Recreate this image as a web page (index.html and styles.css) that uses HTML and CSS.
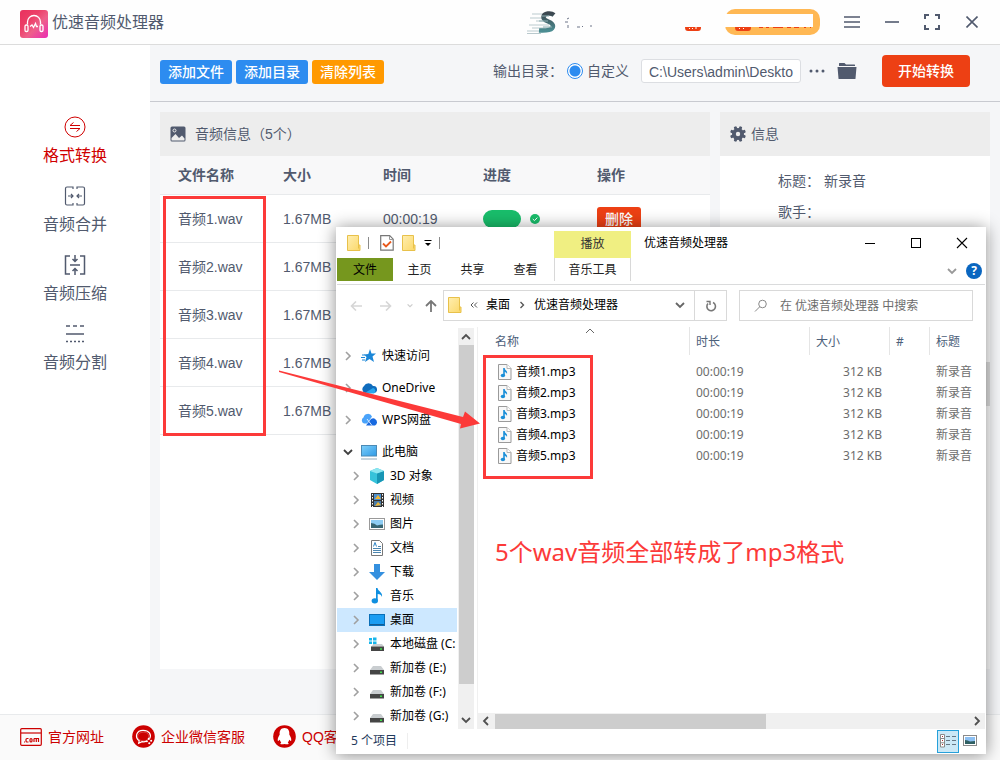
FILE: index.html
```html
<!DOCTYPE html>
<html lang="zh-CN">
<head>
<meta charset="utf-8">
<meta name="viewport" content="width=device-width, initial-scale=1">
<title>优速音频处理器</title>
<link rel="stylesheet" href="styles.css">
</head>
<body>
<svg class="defs" aria-hidden="true">
  <defs>
    <linearGradient id="g-logo" x1="0" y1="0" x2="1" y2="1"><stop offset="0" stop-color="#e9305e"/><stop offset=".35" stop-color="#ec3f67"/><stop offset=".6" stop-color="#ee608a"/><stop offset="1" stop-color="#ea2bb4"/></linearGradient>
    <linearGradient id="g-s" x1="0" y1="0" x2="0" y2="1"><stop offset="0" stop-color="#3c4850"/><stop offset="1" stop-color="#4c8d92"/></linearGradient>
    <linearGradient id="g-folder" x1="0" y1="0" x2="1" y2="1"><stop offset="0" stop-color="#ffeeb0"/><stop offset="1" stop-color="#fbd869"/></linearGradient>
    <linearGradient id="g-screen" x1="0" y1="0" x2="1" y2="1"><stop offset="0" stop-color="#7fd0fa"/><stop offset="1" stop-color="#2f9ae6"/></linearGradient>
  </defs>
  <symbol id="chev" viewBox="0 0 8 10"><path d="M2 1l4 4-4 4" fill="none" stroke="#a0a0a0" stroke-width="1.6"/></symbol>
  <symbol id="chev-down" viewBox="0 0 10 8"><path d="M1 2l4 4 4-4" fill="none" stroke="currentColor" stroke-width="1.8"/></symbol>
  <symbol id="folder" viewBox="0 0 14 16"><path d="M.5.5h11v9.500h1.500v5.500H.5z" fill="url(#g-folder)" stroke="#e8c14a"/><path d="M11.500 10v3.500" stroke="#e8c14a"/></symbol>
  <symbol id="mp3" viewBox="0 0 14 16"><path d="M.5.5h8.500l4 4v11H.5z" fill="#f8f8f8" stroke="#9a9a9a"/><path d="M9 .5v4h4" fill="#fff" stroke="#b5b5b5"/><path d="M6 4v7.500" stroke="#1b8fd8" stroke-width="1.600"/><path d="M6 4c.6 2 4 2.500 3 6C8.500 8.500 7.500 8 6 7.500z" fill="#1b8fd8"/><ellipse cx="4.900" cy="11.500" rx="2.200" ry="1.800" fill="#1b8fd8"/></symbol>
  <symbol id="drive" viewBox="0 0 16 16"><path d="M4 6h8l3 4H1z" fill="#c9cdd0"/><rect x="1" y="10" width="14" height="4.500" fill="#454545"/><rect x="11" y="11.500" width="2" height="1.500" fill="#3fe04a"/></symbol>
</svg>

<div class="app">
  <header class="topbar">
    <svg class="brand-logo" viewBox="0 0 28 28" width="28" height="28" aria-hidden="true"><rect width="28" height="28" rx="3" fill="url(#g-logo)"/><g fill="none" stroke="#fff" stroke-width="1.300"><path d="M7.500 14.500V12a6.500 6.500 0 0 1 13 0v2.500"/><rect x="5" y="15" width="3" height="6.500" rx="1.300"/><rect x="20" y="15" width="3" height="6.500" rx="1.300"/><path d="M10 16.500l2-1.500 1.500 2.500 2-4 1 3h1.500"/></g></svg>
    <h1 class="brand-name">优速音频处理器</h1>
    <svg class="account" viewBox="0 0 294 30" width="294" height="30" aria-hidden="true">
      <g stroke="#b9c9cd" stroke-width="1.200"><path d="M6 6h14M4 10h14M10 13h10M3 17h20M6 20h18M1 23h20M1 25.500h14"/></g>
      <path d="M28 7c-3-2.500-10-2-10.500 2-.5 5 9.500 4 9.500 9 0 4-6 5-14 4.500" fill="none" stroke="url(#g-s)" stroke-width="4.500"/>
      <path d="M16 8h7M13 13h9M17 19h9" stroke="#8fb0b4" stroke-width="1"/>
      <g stroke="#6d7488" fill="none"><path d="M41 11l2-1M39 14h3M42 17v3M51 19h3M56 18l1 1M64 18h2"/></g>
      <path d="M159 19h16c0 3-1 4-3 4h-10c-2 0-3-1-3-4z" fill="#ed4014"/><path d="M163 20l1 1M166 20l1 1M170 19v2" stroke="#fff"/>
      <rect x="199" y="1" width="95" height="26" rx="10" fill="#ffb854"/>
      <path d="M209 19h16c0 3-1 4-3 4h-10c-2 0-3-1-3-4z" fill="#ed4014"/><path d="M213 20l1 1M217 20l1 1" stroke="#fff"/>
      <path d="M233 19h4M240 19h3M247 19h10M261 19h4M268 19h5M278 19h2M284 19h1" stroke="#ed4014" stroke-width="2"/>
      <path d="M199 6h88v13h-88z" fill="#fff"/>
    </svg>
    <div class="win-tools">
      <button aria-label="菜单"><svg viewBox="0 0 16 12" width="16" height="12"><path d="M0 1h16M0 6h16M0 11h16" stroke="currentColor" stroke-width="1.600"/></svg></button>
      <button aria-label="最小化"><svg viewBox="0 0 14 2" width="14" height="2"><path d="M0 1h14" stroke="currentColor" stroke-width="1.600"/></svg></button>
      <button aria-label="最大化"><svg viewBox="0 0 16 16" width="16" height="16"><path d="M1 5V1h4M11 1h4v4M15 11v4h-4M5 15H1v-4" fill="none" stroke="currentColor" stroke-width="2"/></svg></button>
      <button aria-label="关闭"><svg viewBox="0 0 12 12" width="12" height="12"><path d="M.5.5l11 11M11.500.5l-11 11" stroke="currentColor" stroke-width="1.600"/></svg></button>
    </div>
  </header>

  <div class="middle">
    <nav class="sidebar">
      <a href="#" class="side-item active"><svg viewBox="0 0 22 22" width="22" height="22" fill="none" stroke="currentColor" stroke-width="1"><circle cx="11" cy="11" r="10"/><path d="M16 9.500H6L9.500 6.500M6 12.500h10l-3.500 3"/></svg><span>格式转换</span></a>
      <a href="#" class="side-item"><svg viewBox="0 0 22 22" width="22" height="22" fill="none" stroke="currentColor" stroke-width="1.200"><path d="M9 4V2H3Q1.500 2 1.500 3.500v15Q1.500 20 3 20h6v-2M13 4V2h6q1.500 0 1.500 1.500v15Q20.500 20 19 20h-6v-2M4 11h5M7 9l2 2-2 2M18 11h-5M15 9l-2 2 2 2"/></svg><span>音频合并</span></a>
      <a href="#" class="side-item"><svg viewBox="0 0 22 22" width="22" height="22" fill="none" stroke="currentColor" stroke-width="1.500"><path d="M6 2H1.500v18H6M16 2h4.500v18H16M6 11h10M11 1v6M8.500 5L11 7.500 13.500 5M11 21v-6M8.500 17l2.500-2.500 2.500 2.500"/></svg><span>音频压缩</span></a>
      <a href="#" class="side-item"><svg viewBox="0 0 22 22" width="22" height="22" fill="none" stroke="currentColor" stroke-width="1.500"><path d="M2 3h4M9 3h4M16 3h4M2 11h18"/><path d="M2 18.500h18" stroke-dasharray="2 2"/></svg><span>音频分割</span></a>
    </nav>

    <main class="main">
      <div class="toolbar">
        <div class="btn-group">
          <button class="btn blue">添加文件</button>
          <button class="btn blue">添加目录</button>
          <button class="btn orange">清除列表</button>
        </div>
        <div class="output">
          <span>输出目录：</span>
          <input type="radio" class="radio" id="custom" name="out" checked>
          <label for="custom">自定义</label>
          <input type="text" class="path" aria-label="输出路径" value="C:\Users\admin\Deskto">
          <button class="icon-btn dots" aria-label="浏览"><svg viewBox="0 0 16 4" width="16" height="4"><g fill="currentColor"><circle cx="2" cy="2" r="1.500"/><circle cx="8" cy="2" r="1.500"/><circle cx="14" cy="2" r="1.500"/></g></svg></button>
          <button class="icon-btn" aria-label="打开文件夹"><svg viewBox="0 0 20 18" width="20" height="18" fill="currentColor"><path d="M2 4V1.500Q2 1 2.500 1h5L9 2.500h8.500q.5 0 .5.500v1z"/><path d="M.5 5h19l-1 11.500q0 .5-.5.500H2q-.5 0-.5-.5z"/></svg></button>
          <button class="start">开始转换</button>
        </div>
      </div>

      <div class="panels">
        <section class="panel files">
          <h2 class="panel-head"><svg viewBox="0 0 16 16" width="16" height="16"><rect x=".5" y=".5" width="15" height="15" rx="1.500" fill="#515a6e"/><path d="M1.500 14.500V12l4-4 3.500 4 3-2.500 2.500 3v2z" fill="#ededed"/><circle cx="4.500" cy="4.500" r="1.500" fill="none" stroke="#ededed"/></svg>音频信息（5个）</h2>
          <table class="file-table">
            <colgroup><col class="c-name"><col class="c-size"><col class="c-size"><col class="c-prog"><col></colgroup>
            <thead><tr><th>文件名称</th><th>大小</th><th>时间</th><th>进度</th><th>操作</th></tr></thead>
            <tbody>
              <tr><td>音频1.wav</td><td>1.67MB</td><td>00:00:19</td><td><div class="progress"><span class="bar"></span><svg viewBox="0 0 10 10" width="10" height="10"><circle cx="5" cy="5" r="5" fill="#19be6b"/><path d="M2.800 5l1.700 1.600 2.800-3" fill="none" stroke="#fff"/></svg></div></td><td><button class="delete">删除</button></td></tr>
              <tr><td>音频2.wav</td><td>1.67MB</td><td></td><td></td><td></td></tr>
              <tr><td>音频3.wav</td><td>1.67MB</td><td></td><td></td><td></td></tr>
              <tr><td>音频4.wav</td><td>1.67MB</td><td></td><td></td><td></td></tr>
              <tr><td>音频5.wav</td><td>1.67MB</td><td></td><td></td><td></td></tr>
            </tbody>
          </table>
        </section>
        <section class="panel info">
          <h2 class="panel-head"><svg viewBox="0 0 16 16" width="16" height="16"><g fill="#515a6e"><circle cx="8" cy="8" r="6"/><rect x="6.500" y="0" width="3" height="16" rx="1" transform="rotate(22.500 8 8)"/><rect x="6.500" y="0" width="3" height="16" rx="1" transform="rotate(67.500 8 8)"/><rect x="6.500" y="0" width="3" height="16" rx="1" transform="rotate(112.500 8 8)"/><rect x="6.500" y="0" width="3" height="16" rx="1" transform="rotate(157.500 8 8)"/></g><circle cx="8" cy="8" r="2.200" fill="#ededed"/></svg>信息</h2>
          <dl class="meta"><dt>标题：</dt><dd>新录音</dd><dt>歌手：</dt><dd></dd></dl>
          <span class="thumb"></span>
        </section>
      </div>
    </main>
  </div>

  <footer class="footer">
    <a href="#"><svg viewBox="0 0 22 18" width="22" height="18"><g fill="none" stroke="#c00" stroke-width="1.200"><rect x=".7" y=".7" width="20.600" height="16.600" rx="1"/><path d="M1 5h20"/></g><g fill="none" stroke="#c00" stroke-width="1.200"><path d="M4 14h1M8.500 10.500H7q-1 0-1 1V13q0 1 1 1h1.500M14 14v-3.500M14 10.500h4.500V14M16.300 10.500V14"/><rect x="10" y="10.500" width="2" height="3.500" rx="1"/></g></svg>官方网址</a>
    <a href="#"><svg viewBox="0 0 24 24" width="23" height="23"><circle cx="12" cy="12" r="11.800" fill="#c00"/><path d="M12 7.500c-4 0-6 2-6 4.500s2 4.500 6 4.500 5.500-2 5.500-4.500-1.500-4.500-5.500-4.500z" fill="none" stroke="#fff" stroke-opacity=".25"/><g fill="none" stroke="#fff" stroke-width="1.300"><path d="M15 17q-2 .8-4.500.4L7 19l.5-2.500C2.500 12.500 4.500 5.500 11.500 5.500c6.500 0 9 4.500 7 8.500"/></g><g fill="#fff"><circle cx="17.500" cy="14.500" r="1.100"/><circle cx="15.500" cy="17" r="1.100"/><circle cx="20" cy="16.500" r="1.100"/><circle cx="18" cy="19" r="1.100"/></g></svg>企业微信客服</a>
    <a href="#"><svg viewBox="0 0 24 24" width="23" height="23"><circle cx="12" cy="12" r="11.800" fill="#c00"/><path d="M12 3c-4 0-5.500 3-5 7-1 2-2.500 4-2 6.500.5.500 1.500-.5 2-1 .3 1.200.9 2 1.600 2.700C6.500 19.500 8 21 12 19.700c4 1.300 5.500-.2 3.400-1.500.7-.7 1.300-1.500 1.600-2.700.5.500 1.500 1.500 2 1 .5-2.500-1-4.500-2-6.500.5-4-1-7-5-7z" fill="#fff"/></svg>QQ客服</a>
  </footer>

  <section class="explorer" aria-label="文件资源管理器">
    <div class="ex-title">
      <div class="quick">
        <svg width="14" height="16"><use href="#folder"/></svg><i class="sep"></i>
        <svg class="q-doc" viewBox="0 0 14 16" width="14" height="16"><path d="M.7.700h9l3.500 3.500v11H.7z" fill="#fff" stroke="#777" stroke-width="1.200"/><path d="M9.500 1v3.500H13" fill="none" stroke="#999"/><path d="M3 8.500l3 3 5-5" fill="none" stroke="#e8591c" stroke-width="1.800"/></svg>
        <svg class="q-folder" width="14" height="16"><use href="#folder"/></svg>
        <svg class="q-drop" viewBox="0 0 8 8" width="8" height="8"><path d="M.5 1.500h7" stroke="#000"/><path d="M1 4h6L4 7z"/></svg><i class="sep"></i>
      </div>
      <div class="context">播放</div>
      <div class="ex-name">优速音频处理器</div>
      <div class="ex-controls">
        <button aria-label="最小化"><svg viewBox="0 0 10 10" width="10" height="10"><path d="M0 5.500h10" stroke="#000"/></svg></button>
        <button aria-label="最大化"><svg viewBox="0 0 10 10" width="10" height="10"><rect x=".5" y=".5" width="9" height="9" fill="none" stroke="#000"/></svg></button>
        <button aria-label="关闭"><svg viewBox="0 0 12 12" width="12" height="12"><path d="M1 1l10 10M11 1L1 11" stroke="#000" stroke-width="1.100"/></svg></button>
      </div>
    </div>
    <div class="ex-tabs">
      <button class="tab file">文件</button><button class="tab">主页</button><button class="tab">共享</button><button class="tab">查看</button><button class="tab music">音乐工具</button>
      <svg class="tabs-chev" width="10" height="8"><use href="#chev-down"/></svg>
      <button class="help" aria-label="帮助">?</button>
    </div>
    <div class="ex-address">
      <div class="arrows">
        <svg viewBox="0 0 12 10" width="12" height="10"><path d="M6 .5L1.500 5 6 9.500M1.500 5H12" fill="none" stroke="#d6d6d6" stroke-width="1.600"/></svg>
        <svg viewBox="0 0 12 10" width="12" height="10"><path d="M6 .5L10.500 5 6 9.500M10.500 5H0" fill="none" stroke="#d6d6d6" stroke-width="1.600"/></svg>
        <svg class="pale" viewBox="0 0 10 8" width="6" height="5"><path d="M1 2l4 4 4-4" fill="none" stroke="#ccc" stroke-width="2"/></svg>
        <svg viewBox="0 0 12 12" width="12" height="12"><path d="M1 6l5-5 5 5M6 1v11" fill="none" stroke="#777" stroke-width="1.800"/></svg>
      </div>
      <div class="crumbs">
        <svg width="14" height="16"><use href="#folder"/></svg>
        <svg viewBox="0 0 8 6" width="8" height="6"><path d="M3.500.5L1 3l2.500 2.500M7 .5L4.500 3 7 5.500" fill="none" stroke="#555"/></svg>
        <span>桌面</span>
        <svg class="crumb-sep" viewBox="0 0 8 10" width="6" height="8"><path d="M2 1l4 4-4 4" fill="none" stroke="#555" stroke-width="1.800"/></svg>
        <span>优速音频处理器</span>
        <svg class="crumb-drop" width="10" height="8"><use href="#chev-down"/></svg>
      </div>
      <button class="refresh" aria-label="刷新"><svg viewBox="0 0 12 12" width="12" height="12"><path d="M8 2.500a4.300 4.300 0 1 1-5 1" fill="none" stroke="#777" stroke-width="1.600"/><path d="M1.500 1.500h3.500v3.500" fill="none" stroke="#777" stroke-width="1.400"/></svg></button>
      <label class="search"><svg viewBox="0 0 14 14" width="14" height="14"><circle cx="8.500" cy="5" r="3.800" fill="none" stroke="#888"/><path d="M5.700 7.800L1 12.500" stroke="#888"/></svg><input type="text" placeholder="在 优速音频处理器 中搜索" aria-label="搜索"></label>
    </div>
    <div class="ex-body">
      <div class="tree">
        <a href="#" class="root"><svg class="ar" width="8" height="10"><use href="#chev"/></svg><svg viewBox="0 0 16 16" width="16" height="16"><path d="M9 1l1.500 4.500H15l-3.500 3L13 14 8.500 11 4 14l1.500-5L3 6.500 7.300 6z" fill="#1c87d8"/><path d="M1 7h3M0 9.500h4M1 12h3" stroke="#1c87d8"/></svg>快速访问</a>
        <a href="#" class="root"><svg class="ar" width="8" height="10"><use href="#chev"/></svg><svg viewBox="0 0 16 16" width="16" height="16"><path d="M4 13a4 4 0 0 1-1-7 5 5 0 0 1 9 0 3.500 3.500 0 0 1 1 7z" fill="#0f6cbd"/><path d="M3 13.500L12 8a3 3 0 0 1 1 5.500z" fill="#29a7ee"/></svg>OneDrive</a>
        <a href="#" class="root"><svg class="ar" width="8" height="10"><use href="#chev"/></svg><svg viewBox="0 0 16 16" width="16" height="16"><path d="M3 11.500a3.300 3.300 0 0 1-.5-6 4.500 4.500 0 0 1 8.500-1l-2 3-3 4z" fill="#4aa3fa"/><path d="M5 13.500l5-6.500a3.500 3.500 0 0 1 4 6.500z" fill="#1769e0"/><path d="M6 7l5 6.500" stroke="#fff" stroke-width=".8"/></svg>WPS网盘</a>
        <a href="#" class="root pc"><svg class="ar open" width="10" height="8"><use href="#chev-down"/></svg><svg viewBox="0 0 16 16" width="16" height="16"><rect x=".5" y="1.500" width="15" height="10.500" fill="url(#g-screen)" stroke="#4b8ab5"/><path d="M0 15h16" stroke="#90aabb"/></svg>此电脑</a>
        <a href="#"><svg class="ar" width="8" height="10"><use href="#chev"/></svg><svg viewBox="0 0 16 16" width="16" height="16"><path d="M8 0l7 3v9l-7 4-7-4V3z" fill="#36c2da"/><path d="M8 5l7-2v9l-7 4z" fill="#1796b5"/><path d="M1 3l7-3 7 3-7 2.500z" fill="#8de6f0"/></svg>3D 对象</a>
        <a href="#"><svg class="ar" width="8" height="10"><use href="#chev"/></svg><svg viewBox="0 0 16 16" width="16" height="16"><rect x="2" y="1" width="13" height="14" fill="#333"/><rect x="5" y="2" width="7" height="6" fill="#4d90cf"/><rect x="5" y="9" width="7" height="5" fill="#4a7ca8"/><path d="M6 7l3-4 3 4M6 14l3-4 3 3" fill="#f2b632"/><path d="M3.500 2v13M13.500 2v13" stroke="#fff" stroke-dasharray="1.500 1.500"/></svg>视频</a>
        <a href="#"><svg class="ar" width="8" height="10"><use href="#chev"/></svg><svg viewBox="0 0 16 16" width="16" height="16"><rect x=".5" y="2.500" width="15" height="11" fill="#fff" stroke="#999"/><rect x="2" y="4" width="12" height="8" fill="#8ecdf4"/><path d="M2 7q4 0 6 2.500 3-1 6-1V12H2z" fill="#386673"/></svg>图片</a>
        <a href="#"><svg class="ar" width="8" height="10"><use href="#chev"/></svg><svg viewBox="0 0 16 16" width="16" height="16"><path d="M2.500.5h8l3 3v12h-11z" fill="#fff" stroke="#777"/><path d="M4 8.500h8M4 10.500h8M4 12.500h8M9 6.500h3" stroke="#4c86b0"/><path d="M4.500 6.500l1.500-4 1.500 4" fill="none" stroke="#2d83c4"/></svg>文档</a>
        <a href="#"><svg class="ar" width="8" height="10"><use href="#chev"/></svg><svg viewBox="0 0 16 16" width="16" height="16"><path d="M5 0h6v8h5l-8 8-8-8h5z" fill="#3490df"/></svg>下载</a>
        <a href="#"><svg class="ar" width="8" height="10"><use href="#chev"/></svg><svg viewBox="0 0 16 16" width="16" height="16"><path d="M7 0h1.500c.5 3.500 5.500 4 4.500 9-.5-2-2-3-4.300-3v6.500H7z" fill="#0e8fe0"/><ellipse cx="5.800" cy="12.800" rx="3.200" ry="2.600" fill="#0e8fe0"/></svg>音乐</a>
        <a href="#" class="selected"><svg class="ar" width="8" height="10"><use href="#chev"/></svg><svg viewBox="0 0 16 16" width="16" height="16"><rect x=".5" y="2.500" width="15" height="11" fill="#1b9df2" stroke="#0a6fb7"/><path d="M1 12.500h14" stroke="#125c95"/></svg>桌面</a>
        <a href="#"><svg class="ar" width="8" height="10"><use href="#chev"/></svg><svg viewBox="0 0 16 16" width="16" height="16"><path d="M0 2h3v2.500H0zM4 1.500h3.500v3H4zM0 5.500h3V8H0zM4 5.500h3.500v3H4z" fill="#16b5ec"/><path d="M5 8h8l2 2.500H2z" fill="#c9cdd0"/><rect x="2" y="10.500" width="13" height="4.500" fill="#454545"/><path d="M11 13h2" stroke="#3fe04a" stroke-width="1.500"/></svg>本地磁盘 (C:</a>
        <a href="#"><svg class="ar" width="8" height="10"><use href="#chev"/></svg><svg width="16" height="16"><use href="#drive"/></svg>新加卷 (E:)</a>
        <a href="#"><svg class="ar" width="8" height="10"><use href="#chev"/></svg><svg width="16" height="16"><use href="#drive"/></svg>新加卷 (F:)</a>
        <a href="#"><svg class="ar" width="8" height="10"><use href="#chev"/></svg><svg width="16" height="16"><use href="#drive"/></svg>新加卷 (G:)</a>
      </div>
      <div class="vscroll">
        <svg class="up" width="10" height="8"><use href="#chev-down"/></svg><span class="vthumb"></span><svg width="10" height="8"><use href="#chev-down"/></svg>
      </div>
      <div class="listing">
        <table class="mp3-table">
          <colgroup><col class="m-name"><col class="m-time"><col class="m-size"><col class="m-num"><col></colgroup>
          <thead><tr><th><span class="sort"><svg viewBox="0 0 10 6" width="10" height="6"><path d="M1 5l4-4 4 4" fill="none" stroke="#666"/></svg></span>名称</th><th>时长</th><th>大小</th><th>#</th><th>标题</th></tr></thead>
          <tbody>
            <tr><td><svg width="14" height="16"><use href="#mp3"/></svg>音频1.mp3</td><td>00:00:19</td><td>312 KB</td><td></td><td>新录音</td></tr>
            <tr><td><svg width="14" height="16"><use href="#mp3"/></svg>音频2.mp3</td><td>00:00:19</td><td>312 KB</td><td></td><td>新录音</td></tr>
            <tr><td><svg width="14" height="16"><use href="#mp3"/></svg>音频3.mp3</td><td>00:00:19</td><td>312 KB</td><td></td><td>新录音</td></tr>
            <tr><td><svg width="14" height="16"><use href="#mp3"/></svg>音频4.mp3</td><td>00:00:19</td><td>312 KB</td><td></td><td>新录音</td></tr>
            <tr><td><svg width="14" height="16"><use href="#mp3"/></svg>音频5.mp3</td><td>00:00:19</td><td>312 KB</td><td></td><td>新录音</td></tr>
          </tbody>
        </table>
        <div class="hscroll">
          <svg class="left" width="10" height="8"><use href="#chev-down"/></svg><span class="hthumb"></span><svg class="right" width="10" height="8"><use href="#chev-down"/></svg>
        </div>
      </div>
    </div>
    <div class="ex-status">
      <span class="count">5 个项目</span>
      <button class="view on" aria-label="详细信息"><svg viewBox="0 0 16 14" width="16" height="14"><path d="M.5.5h4v12.500h-4zM.5 4.500h4M.5 8.800h4" fill="#fff" stroke="#8a8a8a"/><path d="M6 2.500h4M12 2.500h4M6 6.500h4M12 6.500h4M6 10.500h4M12 10.500h4" stroke="#667783"/><path d="M2 2.500h1M2 6.500h1M2 10.500h1" stroke="#a33"/></svg></button>
      <button class="view" aria-label="大图标"><svg viewBox="0 0 14 12" width="14" height="12"><rect x=".5" y=".5" width="13" height="10" fill="#fff" stroke="#8a8a8a"/><rect x="2" y="2" width="10" height="7" fill="#8dc0f3"/><path d="M2 5q3 0 5 1.500l5-.5v3H2z" fill="#2f5f62"/></svg></button>
    </div>
  </section>

  <div class="mark mark-source"></div>
  <div class="mark mark-result"></div>
  <svg class="arrow" viewBox="0 0 202 60" width="202" height="60" aria-hidden="true"><path d="M0 0.500L184 47 186 41.500 201 53.500 181 58.500 182 54 0 2z" fill="#fc3a39"/></svg>
  <p class="note">5个wav音频全部转成了mp3格式</p>
</div>
</body>
</html>
```
FILE: styles.css
```css
* { box-sizing: border-box; }
body {
  margin: 0;
  color: #515a6e;
  font: 14px/20px "Liberation Sans", "Noto Sans CJK SC", sans-serif;
}
button { padding: 0; border: 0; background: none; color: inherit; font: inherit; cursor: pointer; }
a { color: inherit; text-decoration: none; }
svg { display: block; flex: none; }
.defs { position: absolute; width: 0; height: 0; }

.app { position: relative; display: flex; flex-direction: column; min-height: 100vh; background: #f5f6f8; overflow: hidden; }

/* top bar */
.topbar { display: flex; align-items: center; height: 45px; padding: 0 8px 0 20px; border-bottom: 1px solid #dcdcdc; background: #fefefe; }
.brand-logo { margin-top: 3px; }
.brand-name { margin: 2px auto 0 4px; font-size: 16px; line-height: 24px; font-weight: 400; }
.account { margin-top: 1px; }
.win-tools { display: flex; margin-left: 12px; }
.win-tools button { display: flex; align-items: center; justify-content: center; width: 40px; height: 40px; }

.middle { display: flex; flex: 1; }

/* sidebar */
.sidebar { display: flex; flex-direction: column; gap: 17px; width: 150px; padding-top: 71px; background: #fff; }
.side-item { display: flex; flex-direction: column; align-items: center; gap: 6px; font-size: 16px; line-height: 24px; }
.side-item.active { color: #d00000; }

/* toolbar */
.main { display: flex; flex: 1; flex-direction: column; min-width: 0; }
.toolbar { display: flex; align-items: center; justify-content: space-between; height: 57px; padding: 0 30px 4px 10px; border-bottom: 1px solid #c8cad0; }
.btn-group { display: flex; gap: 4px; padding-top: 2px; }
.btn { height: 24px; padding: 0 8px; border-radius: 3px; color: #fff; font-weight: 500; line-height: 24px; }
.blue { background: #2d8cf0; }
.orange { background: #ff9900; }
.output { display: flex; align-items: center; }
.radio { appearance: none; width: 16px; height: 16px; margin: 0 4px; border: 1px solid #2d8cf0; border-radius: 50%; background: radial-gradient(circle, #2d8cf0 5px, #fff 6px); }
.path { width: 160px; height: 24px; margin-left: 12px; padding: 2px 0 0 7px; border: 1px solid #dcdee2; border-radius: 3px; background: #fff; color: #515a6e; font: inherit; }
.icon-btn { color: #515a6e; }
.dots { margin: 0 12px 0 8px; }
.start { height: 32px; margin-left: 25px; padding: 0 16px; border-radius: 4px; background: #ed4014; color: #fff; font-weight: 500; }

/* panels */
.panels { display: flex; flex: 1; gap: 10px; padding: 10px 10px 45px; }
.panel { background: #fff; }
.files { flex: 1; }
.info { position: relative; width: 270px; }
.panel-head { display: flex; align-items: center; gap: 9px; height: 44px; margin: 0; padding: 0 10px; background: #ededed; font-size: 14px; font-weight: 400; }
.info .panel-head { gap: 5px; }
.file-table { width: 100%; border-collapse: separate; border-spacing: 0; table-layout: fixed; }
.file-table th, .file-table td { padding: 0 0 0 18px; border-bottom: 1px solid #e8eaec; text-align: left; }
.file-table th { height: 39px; background: #f8f8f9; font-weight: 700; }
.file-table td { height: 48px; }
.c-name { width: 105px; }
.c-size { width: 100px; }
.c-prog { width: 114px; }
.progress { display: flex; align-items: center; gap: 9px; }
.bar { width: 38px; height: 18px; border-radius: 9px; background: #19be6b; }
.delete { height: 24px; padding: 0 8px; border-radius: 3px; background: #ed4014; color: #fff; font-weight: 500; }
.meta { display: grid; grid-template-columns: 46px 1fr; row-gap: 11px; margin: 0; padding: 15px 10px 0 58px; }
.meta dt { white-space: nowrap; }
.meta dd { margin: 0; }
.thumb { position: absolute; right: 0; top: 250px; width: 6px; height: 44px; background: #e0e0e0; }

/* footer */
.footer { display: flex; align-items: center; gap: 28px; height: 46px; padding: 0 0 2px 20px; border-top: 1px solid #e8eaec; background: #fafafa; color: #cc0000; }
.footer a { display: flex; align-items: center; gap: 6px; }

/* file explorer window */
.explorer {
  position: absolute; top: 227px; right: 14px; bottom: 6px; left: 336px;
  display: flex; flex-direction: column;
  border: 1px solid #fff; border-top: 0;
  background: #fff; color: #000;
  font: 12px/20px "Noto Sans", "Noto Sans CJK SC", sans-serif;
  box-shadow: 0 1px 16px rgba(0, 0, 0, .45);
}
.ex-title { display: flex; height: 31px; }
.quick { display: flex; align-items: center; width: 217px; padding-left: 10px; }
.sep { width: 1px; height: 12px; margin-left: 7px; background: #8a8a8a; }
.q-doc { margin-left: 11px; }
.q-folder, .q-drop { margin-left: 8px; }
.context { width: 77px; margin-top: 4px; background: #f0ef82; color: #333; line-height: 26px; text-align: center; }
.ex-name { margin: 0 auto 0 13px; line-height: 31px; }
.ex-controls { display: flex; }
.ex-controls button { display: flex; align-items: center; justify-content: center; width: 46px; }
.ex-tabs { display: flex; height: 27px; border-bottom: 1px solid #dadbdc; }
.tab { width: 53px; height: 23px; color: #222; text-align: center; }
.tab.file { width: 56px; background: #76971e; color: #000; }
.tab.music { width: 77px; margin-left: 2px; border: solid #d8d8d8; border-width: 0 1px; }
.tabs-chev { margin: 9px 9px 0 auto; color: #999; }
.help { width: 16px; height: 16px; margin: 5px 3px 0 0; border-radius: 50%; background: #0a66c0; color: #fff; font-weight: 700; line-height: 16px; }
.ex-address { display: flex; height: 42px; padding: 5px 12px 6px 13px; }
.arrows { display: flex; align-items: center; width: 93px; gap: 18px; }
.pale { margin: 0 -6px 0 -3px; }
.crumbs { display: flex; flex: 1; align-items: center; gap: 8px; padding: 0 9px 2px 4px; border: 1px solid #d9d9d9; white-space: nowrap; }
.crumb-sep { margin: 0 1px; }
.crumb-drop { margin-left: auto; color: #666; }
.refresh { display: flex; align-items: center; justify-content: center; width: 32px; border: solid #d9d9d9; border-width: 1px 1px 1px 0; }
.search { display: flex; align-items: center; gap: 12px; width: 234px; margin-left: 12px; padding-left: 14px; border: 1px solid #d9d9d9; }
.search input { width: 180px; padding: 0; border: 0; background: none; font: inherit; }
.search input::placeholder { color: #6d6d6d; opacity: 1; }

.ex-body { display: flex; flex: 1; min-height: 0; }
.tree { width: 120px; padding-top: 17px; overflow: hidden; }
.tree a { display: flex; align-items: center; gap: 5px; height: 24px; padding-left: 15px; white-space: nowrap; }
.tree .ar { margin-right: 4px; }
.tree a.root { height: 24px; margin-bottom: 8px; padding-left: 7px; }
.tree a.pc { margin-bottom: 0; padding-left: 6px; }
.tree a.root .open { margin-right: 3px; color: #404040; }
.tree .selected { background: #cde8ff; }
.vscroll { display: flex; flex-direction: column; align-items: center; justify-content: space-between; width: 16px; margin: 1px 3px 0 1px; padding: 5px 0; background: #f0f0f0; color: #505050; }
.vthumb { flex: 1; width: 15px; margin: 4px 0 32px; background: #cdcdcd; }
.up { transform: rotate(180deg); }
.left { transform: rotate(90deg); }
.right { transform: rotate(-90deg); }
.listing { display: flex; flex: 1; flex-direction: column; justify-content: space-between; min-width: 0; border-left: 1px solid #f0f0f0; }
.mp3-table { width: 100%; border-collapse: separate; border-spacing: 0; table-layout: fixed; }
.mp3-table th { height: 28px; padding: 2px 0 0 6px; border-left: 1px solid #e5e5e5; color: #4c607a; font-weight: 400; text-align: left; }
.mp3-table th:first-child { position: relative; padding-left: 17px; border-left: 0; }
.mp3-table tbody::before { content: ""; display: block; height: 6px; }
.mp3-table td { height: 21px; padding: 0 0 0 7px; color: #6d6d6d; line-height: 21px; }
.mp3-table td:first-child { display: flex; align-items: center; gap: 4px; padding-left: 20px; color: #000; }
.mp3-table td:nth-child(3) { padding-right: 7px; text-align: right; }
.sort { position: absolute; top: 1px; right: 94px; }
.m-name { width: 211px; }
.m-time { width: 120px; }
.m-size { width: 80px; }
.m-num { width: 40px; }
.hscroll { display: flex; align-items: center; height: 16px; padding: 0 3px; background: #f0f0f0; color: #505050; }
.hthumb { width: 54%; height: 15px; margin: 0 auto 0 4px; background: #cdcdcd; }
.ex-status { display: flex; align-items: center; height: 24px; padding: 0 4px 0 14px; }
.count { margin-right: auto; padding-right: 10px; border-right: 1px solid #eee; color: #1e395b; line-height: 16px; }
.view { display: flex; align-items: center; justify-content: center; width: 22px; height: 23px; }
.view.on { border: 1px solid #26a0da; background: #cbe8f6; }

/* annotations laid over the two windows */
.mark { position: absolute; border: 3px solid #fc3a39; }
.mark-source { top: 196px; left: 163px; width: 103px; height: 240px; }
.mark-result { top: 355px; left: 483px; width: 110px; height: 124px; }
.arrow { position: absolute; top: 370px; left: 279px; }
.note { position: absolute; top: 536px; left: 495px; margin: 0; color: #fc3a39; font: 24px/32px "Noto Sans", "Noto Sans CJK SC", sans-serif; white-space: nowrap; }
```
